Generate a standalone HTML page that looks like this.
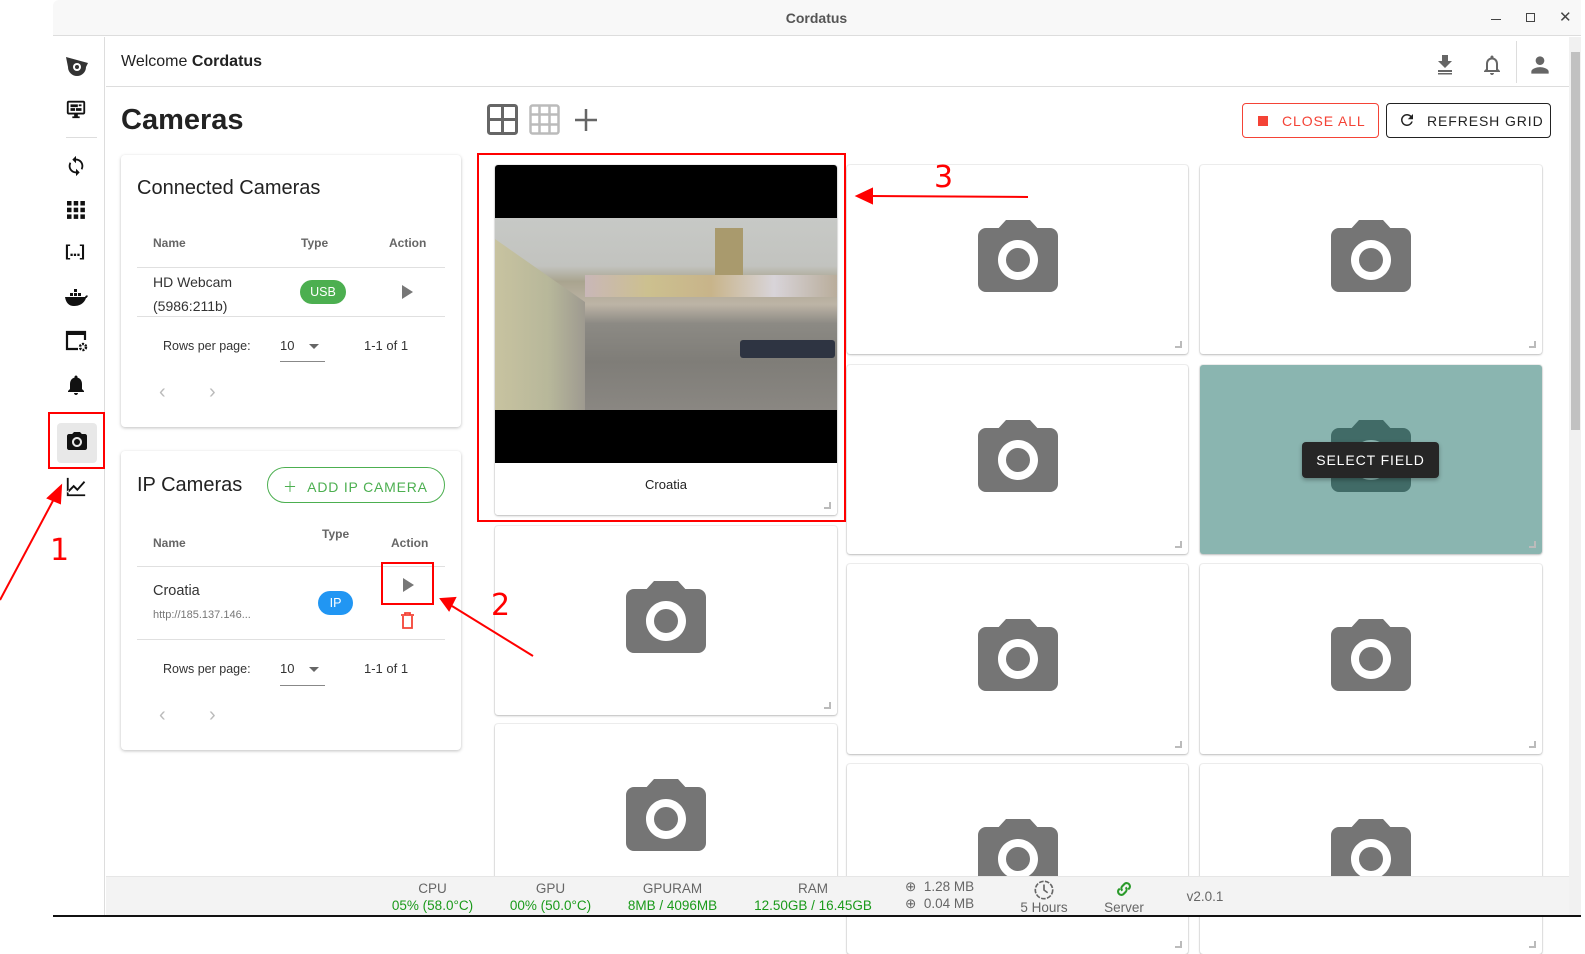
<!DOCTYPE html>
<html><head><meta charset="utf-8"><style>
*{box-sizing:border-box;margin:0;padding:0}
body{width:1585px;height:917px;overflow:hidden;background:#fff;font-family:"Liberation Sans",sans-serif;position:relative;color:#222}
.a{position:absolute}
.card{position:absolute;background:#fff;border-radius:4px;box-shadow:0 1px 3px rgba(0,0,0,.25)}
.cam{position:absolute;background:#fff;border-radius:3px;box-shadow:0 1px 2px rgba(0,0,0,.22),0 0 0 1px #f1f1f1}
.cam svg{position:absolute;left:50%;top:50%;margin:-48px 0 0 -48px}
.cam:after{content:"";position:absolute;right:6px;bottom:6px;width:5px;height:5px;border-right:2px solid #bbb;border-bottom:2px solid #bbb}
.th{font-size:12px;font-weight:bold;color:#666}
.sb{position:absolute;font-size:13.5px;text-align:center;line-height:17px;color:#666;font-family:"Liberation Sans Narrow","Liberation Sans",sans-serif;white-space:nowrap}
.sb b{display:block;font-weight:normal;color:#1a9a1a}
.red{position:absolute;border:2px solid #f00}
.num{position:absolute;color:#f00;font-size:30px;font-family:"DejaVu Sans",sans-serif}
.btn{white-space:nowrap}
</style></head><body>
<!-- window -->
<div class="a" style="left:53px;top:0;width:1532px;height:36px;background:#f8f8f8;border-bottom:1px solid #ddd;border-top-left-radius:6px"></div>
<div class="a" style="left:53px;top:10px;width:1527px;text-align:center;font-size:14px;font-weight:bold;color:#555">Cordatus</div>
<div class="a" style="left:1491px;top:19px;width:10px;height:1px;background:#444"></div>
<div class="a" style="left:1526px;top:13px;width:9px;height:9px;border:1px solid #444"></div>
<div class="a" style="left:1559px;top:8px;font-size:15px;color:#444">✕</div>
<!-- sidebar -->
<div class="a" style="left:53px;top:37px;width:52px;height:880px;background:#fff;border-right:1px solid #ddd"></div>
<div class="a" style="left:66px;top:137px;width:31px;height:1px;background:#ddd"></div>
<svg class="a" style="left:64px;top:55px" width="26" height="22" viewBox="0 0 26 22"><path d="M2 2 L24 8 L22 12 A9 9 0 0 1 4 12 Z" fill="#333"/><circle cx="13" cy="12" r="4" fill="#fff"/><circle cx="13" cy="12" r="2" fill="#333"/></svg>
<svg class="a" style="left:65px;top:98px" width="22" height="22" viewBox="0 0 24 24"><path fill="#111" d="M20 3H4c-1.1 0-2 .9-2 2v11c0 1.1.9 2 2 2h6v2H8v2h8v-2h-2v-2h6c1.1 0 2-.9 2-2V5c0-1.1-.9-2-2-2zm0 13H4V5h16v11zM6 7h8v3H6zm9 0h3v2h-3zm-9 4h5v3H6zm6 0h6v3h-6z"/></svg>
<svg class="a" style="left:65px;top:155px" width="22" height="22" viewBox="0 0 24 24"><path fill="#111" d="M12 4V1L8 5l4 4V6c3.31 0 6 2.69 6 6 0 1.01-.25 1.97-.7 2.8l1.46 1.46A7.93 7.93 0 0 0 20 12c0-4.42-3.58-8-8-8zm0 14c-3.31 0-6-2.69-6-6 0-1.01.25-1.97.7-2.8L5.24 7.74A7.93 7.93 0 0 0 4 12c0 4.42 3.58 8 8 8v3l4-4-4-4v3z"/></svg>
<svg class="a" style="left:67px;top:201px" width="18" height="18" viewBox="0 0 18 18" fill="#111"><rect x="0" y="0" width="4.5" height="4.5"/><rect x="6.7" y="0" width="4.5" height="4.5"/><rect x="13.4" y="0" width="4.5" height="4.5"/><rect x="0" y="6.7" width="4.5" height="4.5"/><rect x="6.7" y="6.7" width="4.5" height="4.5"/><rect x="13.4" y="6.7" width="4.5" height="4.5"/><rect x="0" y="13.4" width="4.5" height="4.5"/><rect x="6.7" y="13.4" width="4.5" height="4.5"/><rect x="13.4" y="13.4" width="4.5" height="4.5"/></svg>
<div class="a" style="left:65px;top:243px;font-size:16px;font-weight:bold;color:#111;letter-spacing:-1px">[...]</div>
<svg class="a" style="left:64px;top:289px" width="24" height="18" viewBox="0 0 24 18"><path fill="#111" d="M1 8h20c1-2 2-2 3-1-1 1-1 2-2 2-2 6-7 8-12 8S2 14 1 8zM6 4h3v3H6zm4 0h3v3h-3zm4 0h3v3h-3zm-4-4h3v3h-3z"/></svg>
<svg class="a" style="left:65px;top:330px" width="24" height="22" viewBox="0 0 24 22"><path fill="none" stroke="#111" stroke-width="2.2" d="M13 19H2V2h18v8"/><rect x="2" y="2" width="18" height="3" fill="#111"/><circle cx="18" cy="17" r="3" fill="none" stroke="#111" stroke-width="2.5" stroke-dasharray="2 1.2"/></svg>
<svg class="a" style="left:64px;top:373px" width="24" height="24" viewBox="0 0 24 24"><path fill="#111" d="M12 22c1.1 0 2-.9 2-2h-4c0 1.1.9 2 2 2zm6-6v-5c0-3.07-1.63-5.64-4.5-6.32V4c0-.83-.67-1.5-1.5-1.5s-1.5.67-1.5 1.5v.68C7.64 5.36 6 7.92 6 11v5l-2 2v1h16v-1l-2-2z"/></svg>
<div class="a" style="left:57px;top:423px;width:40px;height:40px;background:#e8e8e8;border-radius:4px"></div>
<svg class="a" style="left:65px;top:430px" width="24" height="24" viewBox="0 0 24 24"><path fill="#111" d="M9 2L7.17 4H4c-1.1 0-2 .9-2 2v12c0 1.1.9 2 2 2h16c1.1 0 2-.9 2-2V6c0-1.1-.9-2-2-2h-3.17L15 2H9zm3 15c-2.76 0-5-2.24-5-5s2.24-5 5-5 5 2.24 5 5-2.24 5-5 5z"/><circle cx="12" cy="12" r="3" fill="#111"/></svg>
<svg class="a" style="left:65px;top:476px" width="22" height="22" viewBox="0 0 24 24"><path fill="#111" d="M3.5 18.49l6-6.01 4 4L22 6.92l-1.41-1.41-7.09 7.97-4-4L2 16.99zM2 20h20v2H2z M2 2h2v18H2z"/></svg>
<!-- header -->
<div class="a" style="left:106px;top:86px;width:1463px;height:1px;background:#ddd"></div>
<div class="a" style="left:121px;top:53px;font-size:16px;color:#222">Welcome <b>Cordatus</b></div>
<svg class="a" style="left:1433px;top:52px" width="24" height="24" viewBox="0 0 24 24"><path fill="#666" d="M19 9h-4V3H9v6H5l7 7 7-7zM5 18v2h14v-2z M5 21h14v1.5H5z"/></svg>
<svg class="a" style="left:1480px;top:52px" width="24" height="26" viewBox="0 0 24 24"><path fill="#666" d="M12 22c1.1 0 2-.9 2-2h-4c0 1.1.9 2 2 2zm6-6v-5c0-3.07-1.64-5.64-4.5-6.32V4c0-.83-.67-1.5-1.5-1.5s-1.5.67-1.5 1.5v.68C7.63 5.36 6 7.92 6 11v5l-2 2v1h16v-1l-2-2zm-2 1H8v-6c0-2.48 1.51-4.5 4-4.5s4 2.02 4 4.5v6z"/></svg>
<div class="a" style="left:1516px;top:41px;width:1px;height:42px;background:#ddd"></div>
<svg class="a" style="left:1527px;top:52px" width="26" height="26" viewBox="0 0 24 24"><path fill="#666" d="M12 12c2.21 0 4-1.79 4-4s-1.79-4-4-4-4 1.79-4 4 1.79 4 4 4zm0 2c-2.67 0-8 1.34-8 4v2h16v-2c0-2.66-5.33-4-8-4z"/></svg>
<!-- scrollbar -->
<div class="a" style="left:1569px;top:37px;width:12px;height:880px;background:#f1f1f1"></div>
<div class="a" style="left:1571px;top:52px;width:9px;height:378px;background:#c1c1c1"></div>
<div class="a" style="left:1581px;top:0;width:4px;height:917px;background:#fff"></div>
<!-- title -->
<div class="a" style="left:121px;top:104px;font-size:29px;font-weight:bold;color:#222">Cameras</div>
<svg class="a" style="left:487px;top:104px" width="31" height="31" viewBox="0 0 31 31"><rect x="1.5" y="1.5" width="28" height="28" rx="2" fill="none" stroke="#666" stroke-width="3"/><path d="M15.5 2v27M2 15.5h27" stroke="#666" stroke-width="3"/></svg>
<svg class="a" style="left:529px;top:104px" width="31" height="31" viewBox="0 0 31 31" fill="none" stroke="#bbb" stroke-width="2.5"><rect x="1.5" y="1.5" width="28" height="28" rx="2"/><path d="M10.5 2v27M20.5 2v27M2 10.5h27M2 20.5h27"/></svg>
<svg class="a" style="left:574px;top:108px" width="24" height="24" viewBox="0 0 24 24"><path d="M12 1v22M1 12h22" stroke="#666" stroke-width="2.5"/></svg>
<div class="a btn" style="left:1242px;top:103px;width:137px;height:35px;border:1px solid #f44336;border-radius:4px;color:#f44336;font-size:14px;letter-spacing:.9px;padding:9px 0 0 39px">CLOSE ALL</div>
<div class="a" style="left:1258px;top:116px;width:10px;height:10px;background:#f44336"></div>
<div class="a btn" style="left:1386px;top:103px;width:165px;height:35px;border:1px solid #222;border-radius:4px;color:#222;font-size:14px;letter-spacing:.9px;padding:9px 0 0 40px">REFRESH GRID</div>
<svg class="a" style="left:1398px;top:111px" width="18" height="18" viewBox="0 0 24 24"><path fill="#222" d="M17.65 6.35A7.96 7.96 0 0 0 12 4a8 8 0 1 0 7.73 10h-2.08A6 6 0 1 1 12 6c1.66 0 3.14.69 4.22 1.78L13 11h7V4l-2.35 2.35z"/></svg>
<!-- connected cameras -->
<div class="card" style="left:121px;top:155px;width:340px;height:272px"></div>
<div class="a" style="left:137px;top:177px;font-size:20px;color:#222">Connected Cameras</div>
<div class="a th" style="left:153px;top:236px">Name</div>
<div class="a th" style="left:301px;top:236px">Type</div>
<div class="a th" style="left:389px;top:236px">Action</div>
<div class="a" style="left:137px;top:267px;width:308px;height:1px;background:#e0e0e0"></div>
<div class="a" style="left:153px;top:270px;font-size:14px;line-height:24px;color:#333">HD Webcam<br>(5986:211b)</div>
<div class="a" style="left:300px;top:280px;width:46px;height:24px;border-radius:12px;background:#4caf50;color:#fff;font-size:12.5px;text-align:center;line-height:24px">USB</div>
<div class="a" style="left:402px;top:285px;width:0;height:0;border-left:11px solid #777;border-top:7px solid transparent;border-bottom:7px solid transparent"></div>
<div class="a" style="left:137px;top:316px;width:308px;height:1px;background:#e0e0e0"></div>
<div class="a" style="left:163px;top:339px;font-size:12.5px;color:#333">Rows per page:</div>
<div class="a" style="left:280px;top:338px;font-size:13px;color:#333">10</div>
<div class="a" style="left:309px;top:344px;border-left:5px solid transparent;border-right:5px solid transparent;border-top:5px solid #666"></div>
<div class="a" style="left:280px;top:361px;width:45px;height:1px;background:#888"></div>
<div class="a" style="left:364px;top:338px;font-size:13px;color:#333">1-1 of 1</div>
<div class="a" style="left:159px;top:381px;font-size:20px;color:#bbb">‹</div>
<div class="a" style="left:209px;top:381px;font-size:20px;color:#bbb">›</div>
<!-- ip cameras -->
<div class="card" style="left:121px;top:451px;width:340px;height:299px"></div>
<div class="a" style="left:137px;top:474px;font-size:20px;color:#222">IP Cameras</div>
<div class="a btn" style="left:267px;top:467px;width:178px;height:36px;border:1px solid #4caf50;border-radius:18px;color:#4caf50;font-size:14px;letter-spacing:.8px;padding:9px 0 0 15px">＋&nbsp;&nbsp;ADD IP CAMERA</div>
<div class="a th" style="left:153px;top:536px">Name</div>
<div class="a th" style="left:322px;top:527px">Type</div>
<div class="a th" style="left:391px;top:536px">Action</div>
<div class="a" style="left:137px;top:566px;width:308px;height:1px;background:#e0e0e0"></div>
<div class="a" style="left:153px;top:583px;font-size:14.5px;color:#333">Croatia</div>
<div class="a" style="left:153px;top:609px;font-size:11px;color:#777">http://185.137.146...</div>
<div class="a" style="left:318px;top:591px;width:35px;height:24px;border-radius:12px;background:#2196f3;color:#fff;font-size:12.5px;text-align:center;line-height:24px">IP</div>
<div class="a" style="left:403px;top:578px;border-left:11px solid #777;border-top:7px solid transparent;border-bottom:7px solid transparent"></div>
<svg class="a" style="left:400px;top:612px" width="15" height="17" viewBox="0 0 15 17"><path d="M1 3h13M5 3V1h5v2M3 4v12h9V4" fill="none" stroke="#f44336" stroke-width="1.8"/></svg>
<div class="a" style="left:137px;top:639px;width:308px;height:1px;background:#e0e0e0"></div>
<div class="a" style="left:163px;top:662px;font-size:12.5px;color:#333">Rows per page:</div>
<div class="a" style="left:280px;top:661px;font-size:13px;color:#333">10</div>
<div class="a" style="left:309px;top:667px;border-left:5px solid transparent;border-right:5px solid transparent;border-top:5px solid #666"></div>
<div class="a" style="left:280px;top:685px;width:45px;height:1px;background:#888"></div>
<div class="a" style="left:364px;top:661px;font-size:13px;color:#333">1-1 of 1</div>
<div class="a" style="left:159px;top:704px;font-size:20px;color:#bbb">‹</div>
<div class="a" style="left:209px;top:704px;font-size:20px;color:#bbb">›</div>
<!-- grid -->
<div class="cam" style="left:495px;top:165px;width:342px;height:350px;overflow:hidden">
 <div class="a" style="left:0;top:0;width:342px;height:298px;background:#000"></div>
 <div class="a" style="left:0;top:53px;width:342px;height:192px;background:linear-gradient(180deg,#c7c9c6 0%,#c2c3bf 25%,#a9a48f 33%,#bdb4a6 45%,#8c8a84 55%,#7f7d78 75%,#8a8782 100%)"></div>
 <div class="a" style="left:0;top:65px;width:90px;height:180px;background:linear-gradient(90deg,#c8c3a0,#b7b79a 60%,#9e9a90);clip-path:polygon(0 5%,100% 40%,100% 100%,0 100%)"></div>
 <div class="a" style="left:220px;top:63px;width:28px;height:60px;background:#a99a6d"></div>
 <div class="a" style="left:90px;top:110px;width:252px;height:22px;background:linear-gradient(90deg,#c9b7b8,#ccc08f,#c8b48a,#d8d4d9,#b9ad9b)"></div>
 <div class="a" style="left:245px;top:175px;width:95px;height:18px;background:#2e3442;border-radius:3px"></div>
 <div class="a" style="left:0;top:300px;width:342px;height:50px;background:#fff;text-align:center;font-size:13px;color:#222;line-height:40px">Croatia</div>
</div>
<div class="cam" style="left:847px;top:165px;width:341px;height:189px"><svg width="96" height="96" viewBox="0 0 24 24"><path fill="#757575" d="M9 2L7.17 4H4c-1.1 0-2 .9-2 2v12c0 1.1.9 2 2 2h16c1.1 0 2-.9 2-2V6c0-1.1-.9-2-2-2h-3.17L15 2H9zm3 15c-2.76 0-5-2.24-5-5s2.24-5 5-5 5 2.24 5 5-2.24 5-5 5z"/><circle cx="12" cy="12" r="3" fill="#757575"/></svg></div>
<div class="cam" style="left:1200px;top:165px;width:342px;height:189px"><svg width="96" height="96" viewBox="0 0 24 24"><path fill="#757575" d="M9 2L7.17 4H4c-1.1 0-2 .9-2 2v12c0 1.1.9 2 2 2h16c1.1 0 2-.9 2-2V6c0-1.1-.9-2-2-2h-3.17L15 2H9zm3 15c-2.76 0-5-2.24-5-5s2.24-5 5-5 5 2.24 5 5-2.24 5-5 5z"/><circle cx="12" cy="12" r="3" fill="#757575"/></svg></div>
<div class="cam" style="left:847px;top:365px;width:341px;height:189px"><svg width="96" height="96" viewBox="0 0 24 24"><path fill="#757575" d="M9 2L7.17 4H4c-1.1 0-2 .9-2 2v12c0 1.1.9 2 2 2h16c1.1 0 2-.9 2-2V6c0-1.1-.9-2-2-2h-3.17L15 2H9zm3 15c-2.76 0-5-2.24-5-5s2.24-5 5-5 5 2.24 5 5-2.24 5-5 5z"/><circle cx="12" cy="12" r="3" fill="#757575"/></svg></div>
<div class="cam" style="left:1200px;top:365px;width:342px;height:189px;background:#8ab5b0"><svg width="96" height="96" viewBox="0 0 24 24"><path fill="#416b67" d="M9 2L7.17 4H4c-1.1 0-2 .9-2 2v12c0 1.1.9 2 2 2h16c1.1 0 2-.9 2-2V6c0-1.1-.9-2-2-2h-3.17L15 2H9zm3 15c-2.76 0-5-2.24-5-5s2.24-5 5-5 5 2.24 5 5-2.24 5-5 5z"/><circle cx="12" cy="12" r="3" fill="#416b67"/></svg>
 <div class="a btn" style="left:102px;top:77px;width:137px;height:36px;background:#262626;border-radius:4px;color:#fff;font-size:14px;letter-spacing:.9px;text-align:center;line-height:36px;box-shadow:0 2px 4px rgba(0,0,0,.3)">SELECT FIELD</div></div>
<div class="cam" style="left:495px;top:526px;width:342px;height:189px"><svg width="96" height="96" viewBox="0 0 24 24"><path fill="#757575" d="M9 2L7.17 4H4c-1.1 0-2 .9-2 2v12c0 1.1.9 2 2 2h16c1.1 0 2-.9 2-2V6c0-1.1-.9-2-2-2h-3.17L15 2H9zm3 15c-2.76 0-5-2.24-5-5s2.24-5 5-5 5 2.24 5 5-2.24 5-5 5z"/><circle cx="12" cy="12" r="3" fill="#757575"/></svg></div>
<div class="cam" style="left:847px;top:564px;width:341px;height:190px"><svg width="96" height="96" viewBox="0 0 24 24"><path fill="#757575" d="M9 2L7.17 4H4c-1.1 0-2 .9-2 2v12c0 1.1.9 2 2 2h16c1.1 0 2-.9 2-2V6c0-1.1-.9-2-2-2h-3.17L15 2H9zm3 15c-2.76 0-5-2.24-5-5s2.24-5 5-5 5 2.24 5 5-2.24 5-5 5z"/><circle cx="12" cy="12" r="3" fill="#757575"/></svg></div>
<div class="cam" style="left:1200px;top:564px;width:342px;height:190px"><svg width="96" height="96" viewBox="0 0 24 24"><path fill="#757575" d="M9 2L7.17 4H4c-1.1 0-2 .9-2 2v12c0 1.1.9 2 2 2h16c1.1 0 2-.9 2-2V6c0-1.1-.9-2-2-2h-3.17L15 2H9zm3 15c-2.76 0-5-2.24-5-5s2.24-5 5-5 5 2.24 5 5-2.24 5-5 5z"/><circle cx="12" cy="12" r="3" fill="#757575"/></svg></div>
<div class="cam" style="left:495px;top:724px;width:342px;height:190px"><svg width="96" height="96" viewBox="0 0 24 24"><path fill="#757575" d="M9 2L7.17 4H4c-1.1 0-2 .9-2 2v12c0 1.1.9 2 2 2h16c1.1 0 2-.9 2-2V6c0-1.1-.9-2-2-2h-3.17L15 2H9zm3 15c-2.76 0-5-2.24-5-5s2.24-5 5-5 5 2.24 5 5-2.24 5-5 5z"/><circle cx="12" cy="12" r="3" fill="#757575"/></svg></div>
<div class="cam" style="left:847px;top:764px;width:341px;height:190px"><svg width="96" height="96" viewBox="0 0 24 24"><path fill="#757575" d="M9 2L7.17 4H4c-1.1 0-2 .9-2 2v12c0 1.1.9 2 2 2h16c1.1 0 2-.9 2-2V6c0-1.1-.9-2-2-2h-3.17L15 2H9zm3 15c-2.76 0-5-2.24-5-5s2.24-5 5-5 5 2.24 5 5-2.24 5-5 5z"/><circle cx="12" cy="12" r="3" fill="#757575"/></svg></div>
<div class="cam" style="left:1200px;top:764px;width:342px;height:190px"><svg width="96" height="96" viewBox="0 0 24 24"><path fill="#757575" d="M9 2L7.17 4H4c-1.1 0-2 .9-2 2v12c0 1.1.9 2 2 2h16c1.1 0 2-.9 2-2V6c0-1.1-.9-2-2-2h-3.17L15 2H9zm3 15c-2.76 0-5-2.24-5-5s2.24-5 5-5 5 2.24 5 5-2.24 5-5 5z"/><circle cx="12" cy="12" r="3" fill="#757575"/></svg></div>
<!-- status bar -->
<div class="a" style="left:106px;top:876px;width:1463px;height:41px;background:#f3f3f3;border-top:1px solid #e6e6e6"></div>
<div class="a" style="left:53px;top:915px;width:1528px;height:2px;background:#111"></div>
<div class="sb" style="left:385px;top:880px;width:95px">CPU<b>05% (58.0°C)</b></div>
<div class="sb" style="left:503px;top:880px;width:95px">GPU<b>00% (50.0°C)</b></div>
<div class="sb" style="left:620px;top:880px;width:105px">GPURAM<b>8MB / 4096MB</b></div>
<div class="sb" style="left:748px;top:880px;width:130px">RAM<b>12.50GB / 16.45GB</b></div>
<div class="sb" style="left:905px;top:878px;width:85px;text-align:left">⊕&nbsp;&nbsp;1.28 MB<br>⊕&nbsp;&nbsp;0.04 MB</div>
<svg class="a" style="left:1033px;top:879px" width="22" height="22" viewBox="0 0 24 24"><circle cx="12" cy="12" r="9.5" fill="none" stroke="#666" stroke-width="1.8" stroke-dasharray="5 1.5"/><path d="M12 6v6l4 3" fill="none" stroke="#666" stroke-width="1.8"/></svg>
<div class="sb" style="left:1015px;top:899px;width:58px">5 Hours</div>
<svg class="a" style="left:1114px;top:879px" width="20" height="20" viewBox="0 0 24 24"><path fill="none" stroke="#2a9a2a" stroke-width="2.5" d="M10 14a4 4 0 0 1 0-5.5l3-3a4 4 0 0 1 5.5 5.5l-1.5 1.5M14 10a4 4 0 0 1 0 5.5l-3 3a4 4 0 0 1-5.5-5.5l1.5-1.5"/></svg>
<div class="sb" style="left:1096px;top:899px;width:56px">Server</div>
<div class="sb" style="left:1180px;top:888px;width:50px">v2.0.1</div>
<!-- annotations -->
<div class="red" style="left:48px;top:412px;width:57px;height:57px"></div>
<svg class="a" style="left:0;top:0" width="1585" height="917"><g stroke="#f00" stroke-width="2" fill="#f00"><line x1="0" y1="600" x2="55" y2="497"/><polygon points="61,486 48,498 60,503" /><line x1="533" y1="656" x2="452" y2="606"/><polygon points="441,599 455,598 449,610"/><line x1="1028" y1="197" x2="870" y2="196"/><polygon points="857,196 872,189 872,203"/></g></svg>
<div class="num" style="left:50px;top:533px">1</div>
<div class="red" style="left:381px;top:562px;width:53px;height:43px"></div>
<div class="num" style="left:491px;top:588px">2</div>
<div class="red" style="left:477px;top:153px;width:369px;height:369px"></div>
<div class="num" style="left:934px;top:160px">3</div>
</body></html>
